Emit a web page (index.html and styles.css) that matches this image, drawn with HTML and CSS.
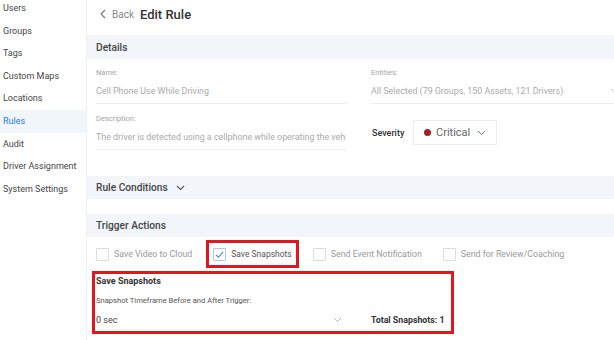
FILE: index.html
```html
<!DOCTYPE html>
<html>
<head>
<meta charset="utf-8">
<link rel="stylesheet" href="styles.css">
</head>
<body>
<div class="app">
  <nav class="sidebar">
    <div class="nav-item">Users</div>
    <div class="nav-item">Groups</div>
    <div class="nav-item">Tags</div>
    <div class="nav-item">Custom Maps</div>
    <div class="nav-item">Locations</div>
    <div class="nav-item active">Rules</div>
    <div class="nav-item">Audit</div>
    <div class="nav-item">Driver Assignment</div>
    <div class="nav-item">System Settings</div>
  </nav>
  <main class="main">
    <header class="page-header">
      <span class="back">
        <svg class="back-icon" width="6" height="10" viewBox="0 0 6 10"><path d="M5 1 1 5l4 4" fill="none" stroke="#777" stroke-width="1.1"/></svg>
        Back
      </span>
      <h1 class="title">Edit Rule</h1>
    </header>

    <div class="band">Details</div>

    <section class="form">
      <div class="col">
        <div class="field">
          <div class="label">Name:</div>
          <div class="value">Cell Phone Use While Driving</div>
        </div>
        <div class="field field-next">
          <div class="label">Description:</div>
          <div class="value">The driver is detected using a cellphone while operating the vehicle</div>
        </div>
      </div>
      <div class="col col-right">
        <div class="field">
          <div class="label">Entities:</div>
          <div class="value value-select">All Selected (79 Groups, 150 Assets, 121 Drivers)
            <svg class="select-chev" width="9" height="6" viewBox="0 0 9 6"><path d="M1 1l3.5 3.5L8 1" fill="none" stroke="#ccc" stroke-width="1"/></svg>
          </div>
        </div>
        <div class="severity-row">
          <span class="severity-label">Severity</span>
          <span class="severity-box">
            <span class="dot"></span>
            <span class="severity-text">Critical</span>
            <svg width="9" height="6" viewBox="0 0 9 6"><path d="M1 1l3.5 3.5L8 1" fill="none" stroke="#777" stroke-width="1"/></svg>
          </span>
        </div>
      </div>
    </section>

    <div class="band band-conditions">Rule Conditions
      <svg class="band-chev" width="9" height="6" viewBox="0 0 9 6"><path d="M1 1l3.5 3.5L8 1" fill="none" stroke="#555" stroke-width="1.1"/></svg>
    </div>

    <div class="band band-trigger">Trigger Actions</div>

    <div class="checks">
      <label class="check"><span class="box"></span>Save Video to Cloud</label>
      <label class="check hl"><span class="box checked"><svg width="11" height="11" viewBox="0 0 11 11"><path d="M2 5.8l2.4 2.4L9.2 2.8" fill="none" stroke="#3d8ee0" stroke-width="1.1"/></svg></span><span class="dark">Save Snapshots</span></label>
      <label class="check"><span class="box"></span>Send Event Notification</label>
      <label class="check"><span class="box"></span>Send for Review/Coaching</label>
    </div>

    <section class="snap">
      <div class="snap-title">Save Snapshots</div>
      <div class="snap-label">Snapshot Timeframe Before and After Trigger:</div>
      <div class="snap-row">
        <div class="snap-select">0 sec
          <svg width="9" height="6" viewBox="0 0 9 6"><path d="M1 1l3.5 3.5L8 1" fill="none" stroke="#bbb" stroke-width="1"/></svg>
        </div>
        <div class="snap-total">Total Snapshots: 1</div>
      </div>
    </section>
  </main>
</div>
</body>
</html>
```

FILE: styles.css
```css
* { box-sizing: border-box; }
html, body {
  margin: 0;
  padding: 0;
  width: 614px;
  height: 340px;
  overflow: hidden;
  background: #fff;
  font-family: Roboto, "Liberation Sans", sans-serif;
}
.app {
  display: flex;
  height: 340px;
}
.sidebar {
  width: 87px;
  flex: none;
  border-right: 1px solid #eef0f3;
  margin-top: -3px;
}
.nav-item {
  height: 22.6px;
  line-height: 23.4px;
  padding-left: 3px;
  font-size: 9px;
  color: #444;
  white-space: nowrap;
}
.nav-item.active {
  background: #f1f6fb;
  color: #2b7bd0;
}
.main {
  flex: 1;
  min-width: 0;
  overflow: hidden;
}
.page-header {
  height: 35px;
  padding: 0 0 7px 13px;
  display: flex;
  align-items: center;
}
.back {
  display: flex;
  align-items: center;
  font-size: 10px;
  color: #888;
  margin-right: 6px;
}
.back-icon { margin-right: 6px; }
.title {
  margin: 0;
  font-size: 13px;
  font-weight: 500;
  color: #333;
}
.band {
  height: 24px;
  background: #f2f6fa;
  padding-left: 9px;
  display: flex;
  align-items: center;
  font-size: 10.2px;
  font-weight: 500;
  color: #444;
  width: 540px;
}
.band-chev { margin-left: 8px; margin-top: 1px; }
.band-conditions { margin-top: 26px; height: 23px; }
.band-trigger { margin-top: 15px; height: 23px; }
.form {
  display: flex;
  gap: 25px;
  padding: 9px 0 0 9px;
}
.col { width: 250px; flex: none; }
.col-right { width: 248px; }
.field {
  border-bottom: 1px solid #eceef1;
  padding-bottom: 5px;
}
.field-next { margin-top: 10px; }
.label {
  font-size: 7.5px;
  line-height: 10px;
  color: #a5a5a5;
}
.value {
  margin-top: 6px;
  font-size: 8.9px;
  line-height: 14px;
  color: #aaa;
  white-space: nowrap;
  overflow: hidden;
}
.value-select {
  display: flex;
  justify-content: space-between;
  align-items: center;
  overflow: visible;
}
.select-chev { margin-right: 0; flex: none; }
.severity-row {
  margin-top: 16px;
  display: flex;
  align-items: center;
}
.severity-label {
  font-size: 9px;
  font-weight: 500;
  color: #333;
  margin-left: 1px;
  width: 41px;
}
.severity-box {
  height: 25px;
  width: 84px;
  border: 1px solid #eceef1;
  display: flex;
  align-items: center;
  padding-left: 10px;
}
.dot {
  width: 7px;
  height: 7px;
  border-radius: 50%;
  background: #a3221f;
  margin-right: 5px;
}
.severity-text {
  font-size: 11px;
  color: #666;
  margin-right: 7px;
}
.checks {
  display: flex;
  align-items: center;
  padding-left: 9px;
  margin-top: 10px;
  height: 14px;
}
.check {
  display: flex;
  align-items: center;
  font-size: 8.8px;
  color: #999;
  margin-right: 21px;
  white-space: nowrap;
  height: 14px;
}
.box {
  width: 13px;
  height: 13px;
  border: 1px solid #dcdcdc;
  border-radius: 1px;
  margin-right: 5px;
  display: flex;
  align-items: center;
  justify-content: center;
  flex: none;
}
.box.checked { border-color: #a9c8ea; }
.dark { color: #555; font-size: 8.5px; }
.hl {
  outline: 3px solid #e3161f;
  outline-offset: 4px;
}
.snap {
  margin: 10px 0 0 5px;
  width: 362px;
  height: 63px;
  border: 3px solid #e3161f;
  padding-left: 1px;
}
.snap-title {
  font-size: 9px;
  font-weight: 700;
  line-height: 14px;
  color: #333;
}
.snap-label {
  margin-top: 7px;
  font-size: 7.6px;
  line-height: 12px;
  color: #555;
}
.snap-row {
  margin-top: 6px;
  display: flex;
  gap: 25px;
  align-items: center;
  line-height: 14px;
}
.snap-select {
  width: 250px;
  display: flex;
  justify-content: space-between;
  align-items: center;
  font-size: 9px;
  color: #444;
  padding-right: 4px;
}
.snap-total {
  font-size: 8.8px;
  font-weight: 700;
  color: #333;
}
```
